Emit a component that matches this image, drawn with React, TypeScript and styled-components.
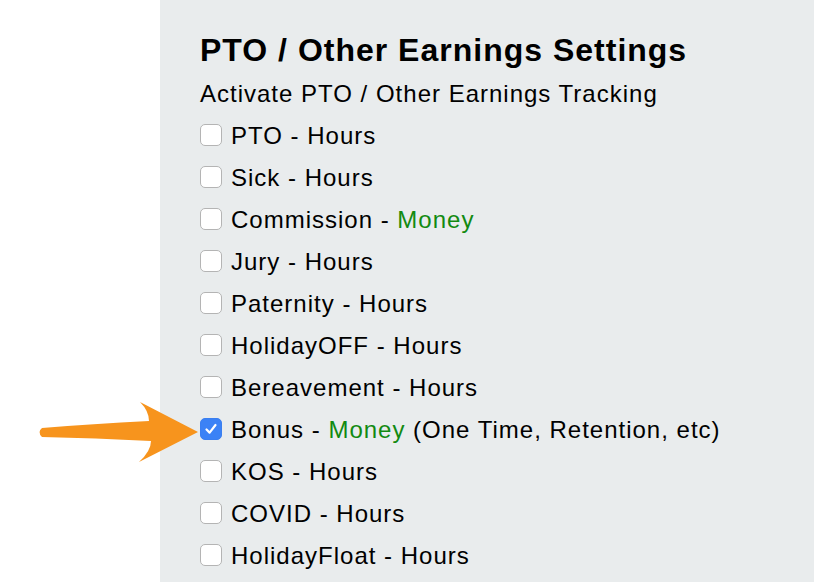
import React from 'react'
import styled, {createGlobalStyle} from 'styled-components'

interface IOption {
    name: string,
    unit: 'Hours' | 'Money',
    note?: string,
    checked?: boolean
}

const options: IOption[] = [
    {name: 'PTO', unit: 'Hours'},
    {name: 'Sick', unit: 'Hours'},
    {name: 'Commission', unit: 'Money'},
    {name: 'Jury', unit: 'Hours'},
    {name: 'Paternity', unit: 'Hours'},
    {name: 'HolidayOFF', unit: 'Hours'},
    {name: 'Bereavement', unit: 'Hours'},
    {name: 'Bonus', unit: 'Money', note: '(One Time, Retention, etc)', checked: true},
    {name: 'KOS', unit: 'Hours'},
    {name: 'COVID', unit: 'Hours'},
    {name: 'HolidayFloat', unit: 'Hours'},
]

const GlobalStyle = createGlobalStyle`
    body {
        margin: 0;
        font-family: "Liberation Sans", Arial, sans-serif;
        color: #000;
    }
`

const Page = styled.div`
    display: flex;
    min-height: 100vh;
    background: #fff;
    position: relative;
    overflow: hidden;
`

const Gutter = styled.div`
    width: 160px;
    flex-shrink: 0;
`

const Panel = styled.section`
    flex: 1;
    background: #e9eced;
    padding: 30px 0 0 40px;
`

const Title = styled.h2`
    margin: 0;
    font-size: 32px;
    line-height: 40px;
    font-weight: bold;
    letter-spacing: 1px;
`

const Subtitle = styled.p`
    margin: 3px 0 0;
    font-size: 24px;
    line-height: 42px;
    letter-spacing: 1px;
`

const Row = styled.label`
    display: flex;
    align-items: center;
    gap: 9px;
    height: 42px;
    font-size: 24px;
    letter-spacing: 1px;
`

const Box = styled.span<{ $checked?: boolean }>`
    width: 22px;
    height: 22px;
    box-sizing: border-box;
    border-radius: 5px;
    border: 1px solid ${p => p.$checked ? '#3b7ff0' : '#b4b4b4'};
    background: ${p => p.$checked ? '#3b82f6' : '#fff'};
    display: flex;
    align-items: center;
    justify-content: center;
    margin-top: -3px;
    flex-shrink: 0;
`

const Unit = styled.span<{ $money?: boolean }>`
    color: ${p => p.$money ? '#128a12' : 'inherit'};
`

const Arrow = styled.svg`
    position: absolute;
    left: 0;
    top: 0;
    pointer-events: none;
`

const Option = ({option}: { option: IOption }) => (
    <Row>
        <Box $checked={option.checked}>
            {option.checked && (
                <svg width="14" height="14" viewBox="0 0 14 14">
                    <path d="M2.5 7.5 L5.6 10.6 L11.5 3" fill="none" stroke="#fff" strokeWidth="2.2"
                          strokeLinecap="round" strokeLinejoin="round"/>
                </svg>
            )}
        </Box>
        <span>
            {option.name} - <Unit $money={option.unit === 'Money'}>{option.unit}</Unit>
            {option.note && <> {option.note}</>}
        </span>
    </Row>
)

const App = () => {
    return (
        <Page>
            <GlobalStyle/>
            <Gutter/>
            <Panel>
                <Title>PTO / Other Earnings Settings</Title>
                <Subtitle>Activate PTO / Other Earnings Tracking</Subtitle>
                {options.map(o => <Option key={o.name} option={o}/>)}
            </Panel>
            <Arrow width="814" height="582" viewBox="0 0 814 582">
                <path
                    d="M42 428 Q92 424 149 421 Q149 411 140 402 L198 432 L139 462 Q151 451 151 441 Q95 438 42 437 Q37 432 42 428 Z"
                    fill="#f7941d"/>
            </Arrow>
        </Page>
    )
}

export default App
